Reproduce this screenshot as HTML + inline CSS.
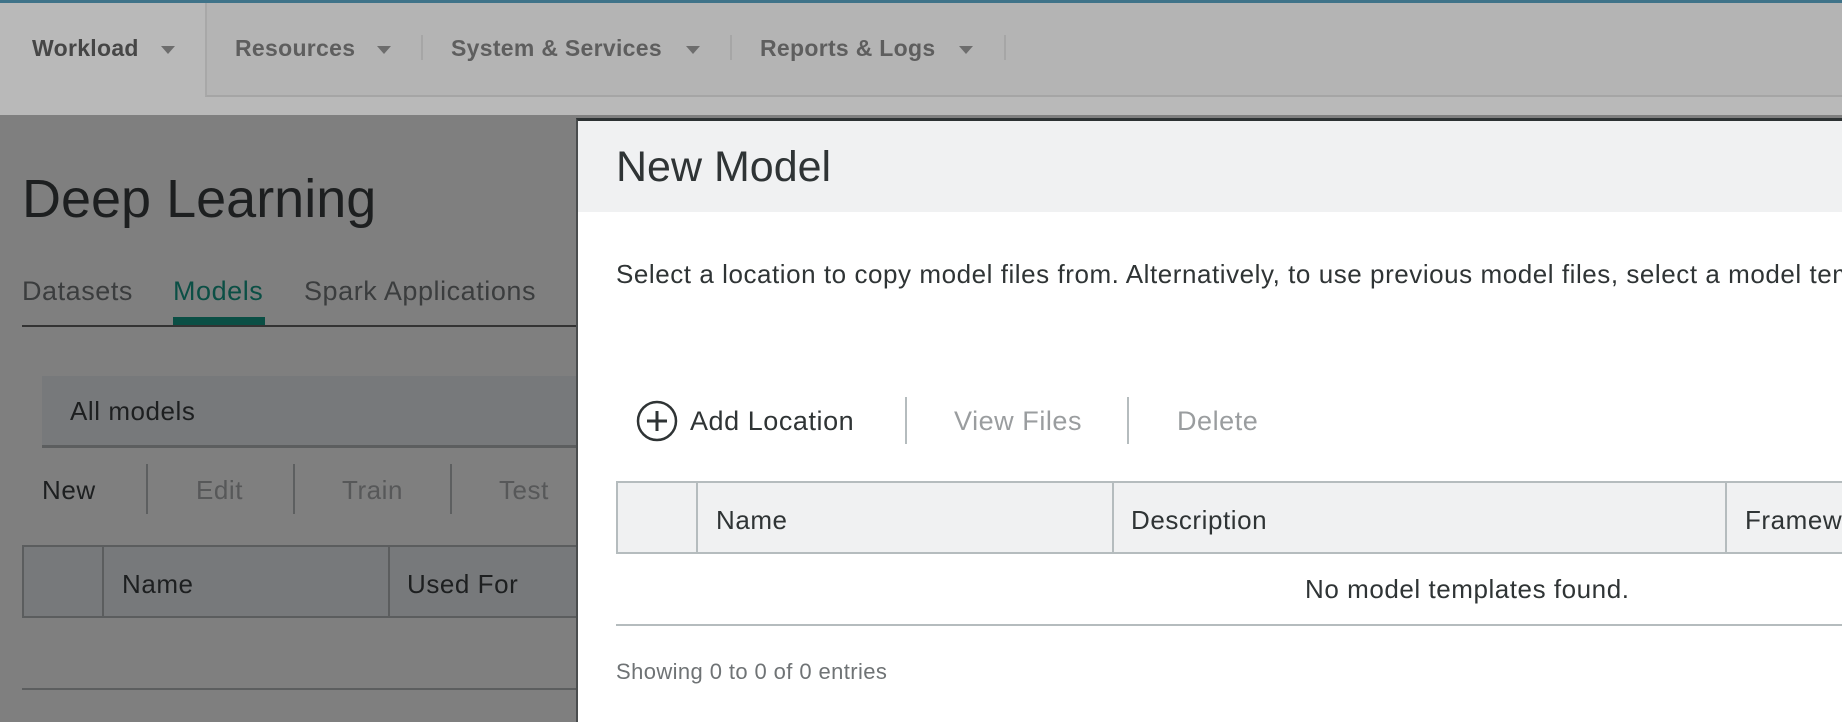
<!DOCTYPE html>
<html><head><meta charset="utf-8"><style>
*{margin:0;padding:0;box-sizing:border-box}
body{width:1842px;height:722px;overflow:hidden;position:relative;background:#7f7f7f;font-family:"Liberation Sans",sans-serif}
.a{position:absolute;white-space:nowrap}
.nav{left:0;top:0;width:1842px;height:115px;background:#b9b9b9;border-top:3px solid #3f7389}
.navr{left:205px;top:3px;width:1637px;height:94px;background:#b4b4b4;border-left:2px solid #a8a8a8;border-bottom:2px solid #a5a5a5}
.nt{font-size:23px;font-weight:bold;color:#5e5e5e;top:35px;letter-spacing:0.3px}
.tri{width:0;height:0;border-left:7px solid transparent;border-right:7px solid transparent;border-top:8px solid #6d6d6d;top:46px}
.vs{width:2px;background:#a6a6a6;top:35px;height:25px}
.m{left:576px;top:118px;width:1266px;height:604px;background:#fff;border-top:3px solid #2d3233;border-left:2px solid #4a4d4e}
.hdr{left:578px;top:121px;width:1264px;height:91px;background:#f0f1f2}
.t{color:#2f3435}
.ls{letter-spacing:0.55px}
</style></head><body>
<div class="a nav"></div>
<div class="a navr"></div>
<div class="a nt" style="left:32px;color:#464646">Workload</div><div class="a tri" style="left:161px"></div>
<div class="a nt" style="left:235px">Resources</div><div class="a tri" style="left:377px"></div><div class="a vs" style="left:421px"></div>
<div class="a nt" style="left:451px">System &amp; Services</div><div class="a tri" style="left:686px"></div><div class="a vs" style="left:730px"></div>
<div class="a nt" style="left:760px">Reports &amp; Logs</div><div class="a tri" style="left:959px"></div><div class="a vs" style="left:1004px"></div>

<div class="a" style="left:22px;top:168px;font-size:54px;color:#1d1f20">Deep Learning</div>
<div class="a ls" style="left:22px;top:276px;font-size:27px;color:#3b3d3e">Datasets</div>
<div class="a ls" style="left:173px;top:276px;font-size:27px;color:#0b4f45">Models</div>
<div class="a ls" style="left:304px;top:276px;font-size:27px;color:#3b3d3e">Spark Applications</div>
<div class="a" style="left:173px;top:317px;width:92px;height:8px;background:#0b4f45"></div>
<div class="a" style="left:22px;top:325px;width:560px;height:2px;background:#333"></div>
<div class="a" style="left:42px;top:376px;width:540px;height:72px;background:#77797b;border-bottom:3px solid #5c5e5f"></div>
<div class="a ls" style="left:70px;top:396px;font-size:26px;color:#1d1f20">All models</div>
<div class="a ls" style="left:42px;top:475px;font-size:26px;color:#1d1f20">New</div>
<div class="a ls" style="left:196px;top:475px;font-size:26px;color:#575859">Edit</div>
<div class="a ls" style="left:342px;top:475px;font-size:26px;color:#575859">Train</div>
<div class="a ls" style="left:499px;top:475px;font-size:26px;color:#575859">Test</div>
<div class="a" style="left:146px;top:464px;width:2px;height:50px;background:#5d5f60"></div>
<div class="a" style="left:293px;top:464px;width:2px;height:50px;background:#5d5f60"></div>
<div class="a" style="left:450px;top:464px;width:2px;height:50px;background:#5d5f60"></div>
<div class="a" style="left:22px;top:545px;width:560px;height:73px;background:#77797b;border:2px solid #5b5d5e"></div>
<div class="a" style="left:102px;top:545px;width:2px;height:73px;background:#5b5d5e"></div>
<div class="a" style="left:388px;top:545px;width:2px;height:73px;background:#5b5d5e"></div>
<div class="a ls" style="left:122px;top:569px;font-size:26px;color:#1d1f20">Name</div>
<div class="a ls" style="left:407px;top:569px;font-size:26px;color:#1d1f20">Used For</div>
<div class="a" style="left:22px;top:688px;width:560px;height:2px;background:#5c5e5f"></div>

<div class="a m"></div>
<div class="a hdr"></div>
<div class="a t" style="left:616px;top:143px;font-size:43px">New Model</div>
<div class="a t ls" style="left:616px;top:259px;font-size:26px">Select a location to copy model files from. Alternatively, to use previous model files, select a model template.</div>
<svg class="a" style="left:636px;top:400px" width="42" height="42"><circle cx="21" cy="21" r="19" fill="none" stroke="#2f3435" stroke-width="2.5"/><path d="M21 11V31M11 21H31" stroke="#2f3435" stroke-width="3"/></svg>
<div class="a t ls" style="left:690px;top:406px;font-size:27px">Add Location</div>
<div class="a" style="left:905px;top:397px;width:2px;height:47px;background:#b5bcbe"></div>
<div class="a ls" style="left:954px;top:406px;font-size:27px;color:#9a9d9f">View Files</div>
<div class="a" style="left:1127px;top:397px;width:2px;height:47px;background:#b5bcbe"></div>
<div class="a ls" style="left:1177px;top:406px;font-size:27px;color:#9a9d9f">Delete</div>
<div class="a" style="left:616px;top:481px;width:1240px;height:73px;background:#f0f1f2;border:2px solid #b5bcbe"></div>
<div class="a" style="left:696px;top:481px;width:2px;height:73px;background:#b5bcbe"></div>
<div class="a" style="left:1112px;top:481px;width:2px;height:73px;background:#b5bcbe"></div>
<div class="a" style="left:1725px;top:481px;width:2px;height:73px;background:#b5bcbe"></div>
<div class="a t ls" style="left:716px;top:505px;font-size:26px">Name</div>
<div class="a t ls" style="left:1131px;top:505px;font-size:26px">Description</div>
<div class="a t ls" style="left:1745px;top:505px;font-size:26px">Framework</div>
<div class="a t ls" style="left:1305px;top:574px;font-size:26px">No model templates found.</div>
<div class="a" style="left:616px;top:624px;width:1230px;height:2px;background:#b5bcbe"></div>
<div class="a" style="left:616px;top:659px;font-size:22px;color:#6f7375;letter-spacing:0.4px">Showing 0 to 0 of 0 entries</div>
</body></html>
